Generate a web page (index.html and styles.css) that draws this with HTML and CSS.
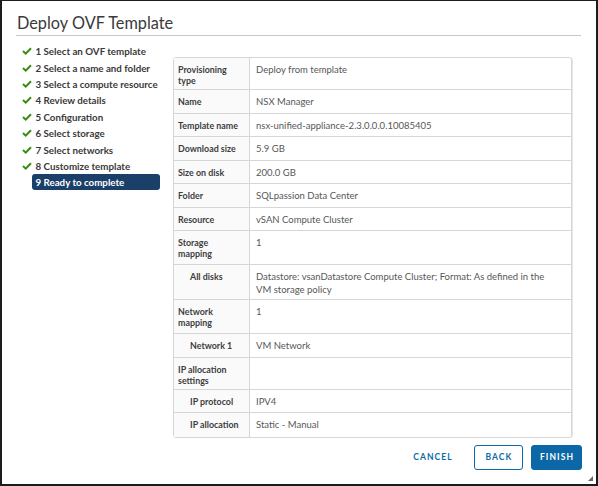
FILE: index.html
```html
<!DOCTYPE html>
<html>
<head>
<meta charset="utf-8">
<link rel="stylesheet" href="styles.css">
</head>
<body>
<div class="dialog">
  <h1 class="title">Deploy OVF Template</h1>
  <div class="body">
    <ul class="steps">
      <li class="step"><span class="check"><svg width="10" height="8" viewBox="0 0 10 8"><path d="M1 4 L3.7 6.6 L9 1.2" fill="none" stroke="#3b8a12" stroke-width="2"/></svg></span><span class="step-label">1 Select an OVF template</span></li>
      <li class="step"><span class="check"><svg width="10" height="8" viewBox="0 0 10 8"><path d="M1 4 L3.7 6.6 L9 1.2" fill="none" stroke="#3b8a12" stroke-width="2"/></svg></span><span class="step-label">2 Select a name and folder</span></li>
      <li class="step"><span class="check"><svg width="10" height="8" viewBox="0 0 10 8"><path d="M1 4 L3.7 6.6 L9 1.2" fill="none" stroke="#3b8a12" stroke-width="2"/></svg></span><span class="step-label">3 Select a compute resource</span></li>
      <li class="step"><span class="check"><svg width="10" height="8" viewBox="0 0 10 8"><path d="M1 4 L3.7 6.6 L9 1.2" fill="none" stroke="#3b8a12" stroke-width="2"/></svg></span><span class="step-label">4 Review details</span></li>
      <li class="step"><span class="check"><svg width="10" height="8" viewBox="0 0 10 8"><path d="M1 4 L3.7 6.6 L9 1.2" fill="none" stroke="#3b8a12" stroke-width="2"/></svg></span><span class="step-label">5 Configuration</span></li>
      <li class="step"><span class="check"><svg width="10" height="8" viewBox="0 0 10 8"><path d="M1 4 L3.7 6.6 L9 1.2" fill="none" stroke="#3b8a12" stroke-width="2"/></svg></span><span class="step-label">6 Select storage</span></li>
      <li class="step"><span class="check"><svg width="10" height="8" viewBox="0 0 10 8"><path d="M1 4 L3.7 6.6 L9 1.2" fill="none" stroke="#3b8a12" stroke-width="2"/></svg></span><span class="step-label">7 Select networks</span></li>
      <li class="step"><span class="check"><svg width="10" height="8" viewBox="0 0 10 8"><path d="M1 4 L3.7 6.6 L9 1.2" fill="none" stroke="#3b8a12" stroke-width="2"/></svg></span><span class="step-label">8 Customize template</span></li>
      <li class="step active"><span class="check"></span><span class="step-label">9 Ready to complete</span></li>
    </ul>
    <div class="main">
      <div class="stack">
        <div class="row"><div class="label">Provisioning type</div><div class="value">Deploy from template</div></div>
        <div class="row"><div class="label">Name</div><div class="value">NSX Manager</div></div>
        <div class="row"><div class="label">Template name</div><div class="value">nsx-unified-appliance-2.3.0.0.0.10085405</div></div>
        <div class="row"><div class="label">Download size</div><div class="value">5.9 GB</div></div>
        <div class="row"><div class="label">Size on disk</div><div class="value">200.0 GB</div></div>
        <div class="row"><div class="label">Folder</div><div class="value">SQLpassion Data Center</div></div>
        <div class="row"><div class="label">Resource</div><div class="value">vSAN Compute Cluster</div></div>
        <div class="row tall"><div class="label">Storage mapping</div><div class="value">1</div></div>
        <div class="row"><div class="label sub">All disks</div><div class="value">Datastore: vsanDatastore Compute Cluster; Format: As defined in the VM storage policy</div></div>
        <div class="row tall"><div class="label">Network mapping</div><div class="value">1</div></div>
        <div class="row"><div class="label sub">Network 1</div><div class="value">VM Network</div></div>
        <div class="row"><div class="label">IP allocation settings</div><div class="value"></div></div>
        <div class="row"><div class="label sub">IP protocol</div><div class="value">IPV4</div></div>
        <div class="row"><div class="label sub">IP allocation</div><div class="value">Static - Manual</div></div>
      </div>
    </div>
  </div>
  <div class="footer">
    <button class="btn btn-link">CANCEL</button>
    <button class="btn btn-outline">BACK</button>
    <button class="btn btn-primary">FINISH</button>
  </div>
  <svg class="grip" width="5" height="5" viewBox="0 0 5 5"><path d="M5 0 L5 5 L0 5 Z" fill="#666"/></svg>
</div>
</body>
</html>
```
FILE: styles.css
```css
html, body {
  margin: 0;
  padding: 0;
  background: #fff;
}
body {
  font-family: Lato, "Liberation Sans", sans-serif;
}
.dialog {
  position: relative;
  width: 598px;
  height: 486px;
  box-sizing: border-box;
  border: 2px solid #1c1c1c;
  border-top-width: 1px;
  padding: 0 14px;
  background: #fff;
}
.title {
  margin: 0 1px 0 0;
  padding: 12px 0 2px 1px;
  font-size: 16.3px;
  line-height: 20px;
  font-weight: 400;
  color: #3a3a3a;
  border-bottom: 1px solid #c8c8c8;
}
.body {
  display: flex;
  gap: 14px;
  padding-top: 7px;
}
.steps {
  list-style: none;
  margin: 0;
  padding: 0 0 0 6px;
  width: 137px;
  flex: none;
}
.step {
  display: flex;
  align-items: center;
  height: 16.4px;
}
.check {
  width: 10px;
  height: 16px;
  display: flex;
  align-items: center;
  flex: none;
}
.check svg {
  display: block;
}
.step-label {
  display: block;
  flex: none;
  width: 124px;
  padding-left: 3.5px;
  font-size: 9.75px;
  font-weight: 700;
  color: #3a3a3a;
  line-height: 16px;
  white-space: nowrap;
  border-radius: 3px;
}
.step.active .step-label {
  background: #1a3f68;
  color: #fff;
}
.main {
  flex: 1;
  padding-top: 14px;
  padding-right: 10px;
}
.stack {
  border: 1px solid #d6d6d6;
  border-radius: 3px;
  box-shadow: 1px 0 0 #e6e6e6;
}
.row {
  display: grid;
  grid-template-columns: 76px 1fr;
  box-sizing: border-box;
  min-height: 23.5px;
  border-bottom: 1px solid #d6d6d6;
}
.row:last-child {
  border-bottom: none;
}
.row.tall .label {
  padding-bottom: 5px;
}
.label {
  background: #fafafa;
  border-right: 1px solid #d6d6d6;
  padding: 6px 10px 3px 4px;
  font-size: 8.9px;
  line-height: 11px;
  font-weight: 700;
  color: #3d3d3d;
}
.label.sub {
  padding-left: 16px;
  padding-right: 2px;
}
.value {
  padding: 5px 20px 3px 6px;
  font-size: 9.5px;
  line-height: 13px;
  color: #575757;
}
.footer {
  display: flex;
  justify-content: flex-end;
  align-items: center;
  gap: 8px;
  margin-top: 7px;
}
.btn {
  height: 25px;
  box-sizing: border-box;
  font-family: Lato, "Liberation Sans", sans-serif;
  font-size: 8.5px;
  font-weight: 700;
  letter-spacing: 1.1px;
  border-radius: 3px;
  padding: 0 0 0 1px;
  background: transparent;
  border: 1px solid transparent;
  color: #0b6aa8;
}
.btn-link {
  margin-right: 9px;
  width: 49px;
}
.btn-outline {
  border-color: #0b6aa8;
  width: 49px;
}
.btn-primary {
  background: #0b67a6;
  border-color: #0b67a6;
  color: #fff;
  width: 51px;
}
.grip {
  position: absolute;
  right: 3px;
  bottom: 3px;
}
```
